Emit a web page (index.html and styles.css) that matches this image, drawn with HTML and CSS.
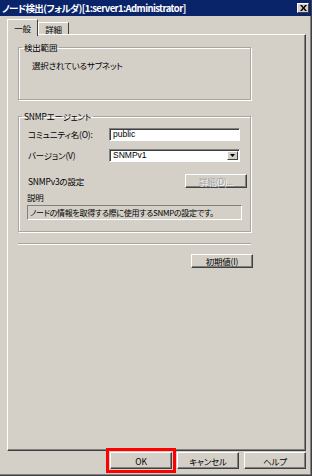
FILE: index.html
```html
<!DOCTYPE html>
<html lang="ja">
<head>
<meta charset="utf-8">
<link rel="stylesheet" href="styles.css">
</head>
<body>
<div class="window">
  <div class="titlebar">
    <span class="title">ノード検出(フォルダ)[1:server1:Administrator]</span>
    <span class="close"><svg width="7" height="6" viewBox="0 0 7 6"><path d="M0 0h2l1.5 2 1.5-2h2l-2.5 3 2.5 3h-2l-1.5-2-1.5 2h-2l2.5-3z" fill="#000"/></svg></span>
  </div>
  <div class="body">
    <div class="tabs">
      <div class="tab active">一般</div>
      <div class="tab">詳細</div>
    </div>
    <div class="panel">
      <fieldset class="group g1">
        <legend>検出範囲</legend>
        <div class="text">選択されているサブネット</div>
      </fieldset>
      <fieldset class="group g2">
        <legend>SNMPエージェント</legend>
        <div class="row r1">
          <span class="label">コミュニティ名(O):</span>
          <span class="input">public</span>
        </div>
        <div class="row r2">
          <span class="label">バージョン(V)</span>
          <span class="input select">SNMPv1<span class="drop"><svg width="5" height="3" viewBox="0 0 5 3"><path d="M0 0h5l-2.5 3z" fill="#000"/></svg></span></span>
        </div>
        <div class="row r3">
          <span class="label">SNMPv3の設定</span>
          <span class="btn disabled">詳細(D)...</span>
        </div>
        <div class="desc-label">説明</div>
        <div class="desc">ノードの情報を取得する際に使用するSNMPの設定です。</div>
      </fieldset>
      <div class="separator"></div>
      <div class="reset-row">
        <span class="btn reset">初期値(I)</span>
      </div>
    </div>
    <div class="footer">
      <span class="btn foot ok">OK</span>
      <span class="btn foot">キャンセル</span>
      <span class="btn foot">ヘルプ</span>
    </div>
  </div>
</div>
</body>
</html>
```
FILE: styles.css
```css
* { box-sizing: border-box; }
html, body { margin: 0; padding: 0; }
body {
  width: 312px;
  height: 476px;
  overflow: hidden;
  font-family: "Noto Sans CJK JP", "Noto Sans", sans-serif;
  font-size: 8.5px;
  letter-spacing: -0.2px;
  font-feature-settings: "palt" 1;
  color: #000;
  background: #d4d0c8;
}
.window {
  width: 312px;
  height: 476px;
  display: flex;
  flex-direction: column;
  background: #d4d0c8;
  border-right: 1px solid #404040;
  border-bottom: 1px solid #404040;
  box-shadow: inset -1px -1px 0 #808080;
}
.titlebar {
  height: 16px;
  flex: none;
  background: #0a246a;
  color: #fff;
  display: flex;
  align-items: center;
  justify-content: space-between;
  padding: 0 2px 0 2px;
}
.title {
  font-weight: bold;
  font-size: 9.5px;
  line-height: 16px;
  letter-spacing: -0.6px;
}
.close {
  width: 12px;
  height: 10px;
  background: #d4d0c8;
  border: 1px solid;
  border-color: #fff #404040 #404040 #fff;
  display: flex;
  align-items: center;
  justify-content: center;
}
.body {
  flex: 1;
  display: flex;
  flex-direction: column;
  padding: 3px 5px 0 7px;
}
.tabs {
  height: 15px;
  display: flex;
  align-items: flex-end;
  position: relative;
  z-index: 1;
}
.tab {
  height: 12px;
  width: 31px;
  border: 1px solid;
  border-color: #fff #404040 transparent #fff;
  border-bottom: none;
  display: flex;
  align-items: center;
  justify-content: center;
  line-height: 12px;
  background: #d4d0c8;
}
.tab.active {
  height: 17px;
  width: 31px;
  margin-bottom: -2px;
  border-right-color: #404040;
}
.panel {
  flex: 1;
  border: 1px solid;
  border-color: #fff #404040 #404040 #fff;
  box-shadow: inset -1px -1px 0 #808080;
  padding: 6px 0 0 10px;
  display: flex;
  flex-direction: column;
}
.group {
  margin: 0;
  width: 233px;
  border: 1px solid #a8a6a0;
  box-shadow: 1px 1px 0 #fff, inset 1px 1px 0 #fff;
  padding: 0 0 0 3px;
}
.group legend {
  margin: 0;
  padding: 0 2px;
  line-height: 13px;
}
.g1 {
  height: 59px;
}
.text { line-height: 13px; margin: 5px 0 0 10px; }
.g2 {
  margin-top: 10px;
  padding-bottom: 11px;
}
.g2 > * { margin-left: 6px; }
.row {
  display: flex;
  align-items: center;
  height: 13px;
  width: 219px;
}
.r1 { margin-top: 5px; }
.label {
  width: 81px;
  line-height: 13px;
}
.r2 { margin-top: 8px; }
.r3 { margin-top: 12px; justify-content: space-between; height: 14px; }
.input {
  width: 131px;
  height: 13px;
  background: #fff;
  border: 1px solid;
  border-color: #808080 #fff #fff #808080;
  box-shadow: inset 1px 1px 0 #404040;
  padding-left: 3px;
  line-height: 11px;
  font-size: 8.5px;
  letter-spacing: 0;
  font-family: "Liberation Sans", "Noto Sans", sans-serif;
  display: flex;
  align-items: center;
}
.select { justify-content: space-between; padding-right: 1px; }
.drop {
  width: 11px;
  height: 9px;
  background: #d4d0c8;
  border: 1px solid;
  border-color: #fff #404040 #404040 #fff;
  display: flex;
  align-items: center;
  justify-content: center;
}
.btn {
  display: flex;
  align-items: center;
  justify-content: center;
  background: #d4d0c8;
  border: 1px solid;
  border-color: #fff #404040 #404040 #fff;
  box-shadow: inset -1px -1px 0 #808080;
  line-height: 12px;
}
.btn.disabled {
  width: 62px;
  height: 14px;
  color: #a0a0a0;
  text-shadow: 1px 1px 0 #fff;
}
.g2 > .desc-label {
  margin-top: 3px;
  line-height: 13px;
  margin-left: 5px;
}
.g2 > .desc {
  margin-top: 1px;
  margin-left: 5px;
  width: 215px;
  height: 15px;
  border: 1px solid;
  border-color: #808080 #fff #fff #808080;
  padding-left: 2px;
  line-height: 13px;
  font-size: 8px;
  letter-spacing: -0.3px;
  white-space: nowrap;
}
.separator {
  margin-top: 11px;
  width: 233px;
  height: 2px;
  border-top: 1px solid #a8a6a0;
  border-bottom: 1px solid #fff;
}
.reset-row {
  width: 235px;
  display: flex;
  justify-content: flex-end;
  margin-top: 9px;
}
.btn.reset {
  width: 62px;
  height: 14px;
}
.footer {
  flex: none;
  display: flex;
  justify-content: flex-end;
  gap: 5px;
  padding: 1px 0 0 0;
  height: 24px;
}
.btn.foot {
  width: 62px;
  height: 17px;
}
.btn.ok {
  outline: 3px solid #f00;
  outline-offset: 1px;
}
```
